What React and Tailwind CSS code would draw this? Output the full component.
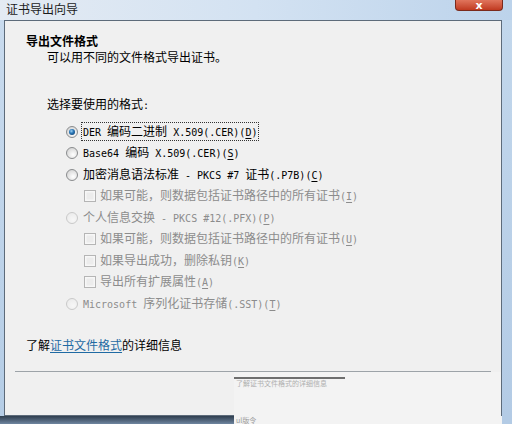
import React from 'react'

const CJK = "font-['Noto_Sans_CJK_SC',sans-serif]"

function M({ children }) {
  return <span className="font-['DejaVu_Sans_Mono',monospace] text-[10px]">{children}</span>
}

function U({ children }) {
  return <span className="underline underline-offset-[2px]">{children}</span>
}

function Radio({ checked, disabled }) {
  const stroke = disabled ? '#c9c9c9' : '#8a8c8e'
  return (
    <svg width="12" height="12" viewBox="0 0 12 12" className="shrink-0">
      <defs>
        <radialGradient id={disabled ? 'rgd' : 'rge'} cx="0.6" cy="0.65" r="0.6">
          <stop offset="0" stopColor={disabled ? '#f7f7f7' : '#ffffff'} />
          <stop offset="1" stopColor={disabled ? '#ececec' : '#d9d9d9'} />
        </radialGradient>
        <radialGradient id="rdot" cx="0.4" cy="0.35" r="0.7">
          <stop offset="0" stopColor="#9fd0f2" />
          <stop offset="0.5" stopColor="#2a78b8" />
          <stop offset="1" stopColor="#154a7e" />
        </radialGradient>
      </defs>
      <circle cx="6" cy="6" r="5.5" fill={`url(#${disabled ? 'rgd' : 'rge'})`} stroke={stroke} />
      {checked && <circle cx="6" cy="6" r="3" fill="url(#rdot)" />}
    </svg>
  )
}

function Check({ disabled }) {
  return (
    <svg width="12" height="12" viewBox="0 0 12 12" className="shrink-0">
      <rect x="0.5" y="0.5" width="11" height="11" fill="#f7f7f7" stroke={disabled ? '#b5b5b5' : '#8e8f8f'} />
      <rect x="2.5" y="2.5" width="7" height="7" fill={disabled ? '#ececec' : '#dedede'} />
    </svg>
  )
}

function Row({ indent, children }) {
  return (
    <div className={`flex h-[21.5px] items-center ${indent ? 'pl-[79px]' : 'pl-[61px]'}`}>
      {children}
    </div>
  )
}

export default function App() {
  const grey = 'text-[#8c8c8c]'
  return (
    <div className={`flex h-[424px] w-[512px] flex-col overflow-hidden bg-[#c6d9ee] text-[12px] leading-[16px] text-black ${CJK}`}>
      {/* title bar */}
      <div className="flex h-[20px] shrink-0 bg-gradient-to-r from-[#e4ebf3] via-[#d3e2f2] to-[#bcd3eb]">
        <div className="pl-[6px] pt-[1px] text-[12px] leading-[15px] text-[#1b1b1b]">证书导出向导</div>
        <div className="ml-auto mr-[9px] flex h-[11px] w-[48px] items-end justify-center rounded-b-[4px] border border-t-0 border-[#7a2a1c] bg-gradient-to-b from-[#e0745c] to-[#c0391f]">
          <span className="font-['DejaVu_Sans',sans-serif] text-[11px] font-bold leading-[9px] text-white">x</span>
        </div>
      </div>

      {/* middle */}
      <div className="flex h-[396px] shrink-0">
        <div className="w-[4px] bg-gradient-to-b from-[#c9dbee] to-[#b5cde6]" />
        <div className="flex w-[498px] flex-col border-x border-t border-[#5d6b7a] bg-[#f0f0f0]">
          <div className="pl-[21px] pt-[12px] font-bold">导出文件格式</div>
          <div className="pl-[42px]">可以用不同的文件格式导出证书。</div>

          <div className="mt-[31px] pl-[42px]">选择要使用的格式<M>:</M></div>

          <div className="mt-[7px] flex flex-col">
            <Row>
              <Radio checked />
              <div className="ml-[3px] border border-dotted border-[#333] px-[1px] leading-[15px]">
                <M>DER </M>编码二进制<M> X.509(.CER)(<U>D</U>)</M>
              </div>
            </Row>
            <Row>
              <Radio />
              <div className="ml-[5px]">
                <M>Base64 </M>编码<M> X.509(.CER)(<U>S</U>)</M>
              </div>
            </Row>
            <Row>
              <Radio />
              <div className="ml-[5px]">
                加密消息语法标准<M> - PKCS #7 </M>证书<M>(.P7B)(<U>C</U>)</M>
              </div>
            </Row>
            <Row indent>
              <Check disabled />
              <div className={`ml-[4px] ${grey}`}>
                如果可能，则数据包括证书路径中的所有证书<M>(<U>I</U>)</M>
              </div>
            </Row>
            <Row>
              <Radio disabled />
              <div className={`ml-[5px] ${grey}`}>
                个人信息交换<M> - PKCS #12(.PFX)(<U>P</U>)</M>
              </div>
            </Row>
            <Row indent>
              <Check disabled />
              <div className={`ml-[4px] ${grey}`}>
                如果可能，则数据包括证书路径中的所有证书<M>(<U>U</U>)</M>
              </div>
            </Row>
            <Row indent>
              <Check disabled />
              <div className={`ml-[4px] ${grey}`}>
                如果导出成功，删除私钥<M>(<U>K</U>)</M>
              </div>
            </Row>
            <Row indent>
              <Check disabled />
              <div className={`ml-[4px] ${grey}`}>
                导出所有扩展属性<M>(<U>A</U>)</M>
              </div>
            </Row>
            <Row>
              <Radio disabled />
              <div className={`ml-[5px] ${grey}`}>
                <M>Microsoft </M>序列化证书存储<M>(.SST)(<U>T</U>)</M>
              </div>
            </Row>
          </div>

          <div className="mt-[22px] pl-[21px]">
            了解<span className="text-[#1f6aa3] underline underline-offset-[2px]">证书文件格式</span>的详细信息
          </div>

          <div className="mx-[10px] mt-[18px] h-[1px] bg-[#9da3a8]" />

          <div className="flex flex-1">
            <div className="w-[229px] border-b border-[#5d6b7a]" />
            <div className="flex flex-1 flex-col bg-[#f3f3f3] pt-[5px]">
              <div className="h-[2px] w-[111px] bg-[#6e6e6e]" />
              <div className="pl-[2px] text-[7px] leading-[8px] text-[#b0b0b0]">了解证书文件格式的详细信息</div>
            </div>
          </div>
        </div>
        <div className="w-[10px] bg-gradient-to-b from-[#c2d7ec] to-[#b3cbe5]" />
      </div>

      {/* bottom frame */}
      <div className="flex h-[8px] shrink-0">
        <div className="w-[234px] bg-gradient-to-b from-[#2f3e4f] to-[#6f86a0]" />
        <div className="flex w-[268px] items-center bg-[#f3f3f3] pl-[2px] text-[7px] leading-[8px] text-[#9a9a9a]">ul版令</div>
        <div className="w-[10px] bg-[#b3cbe5]" />
      </div>
    </div>
  )
}
